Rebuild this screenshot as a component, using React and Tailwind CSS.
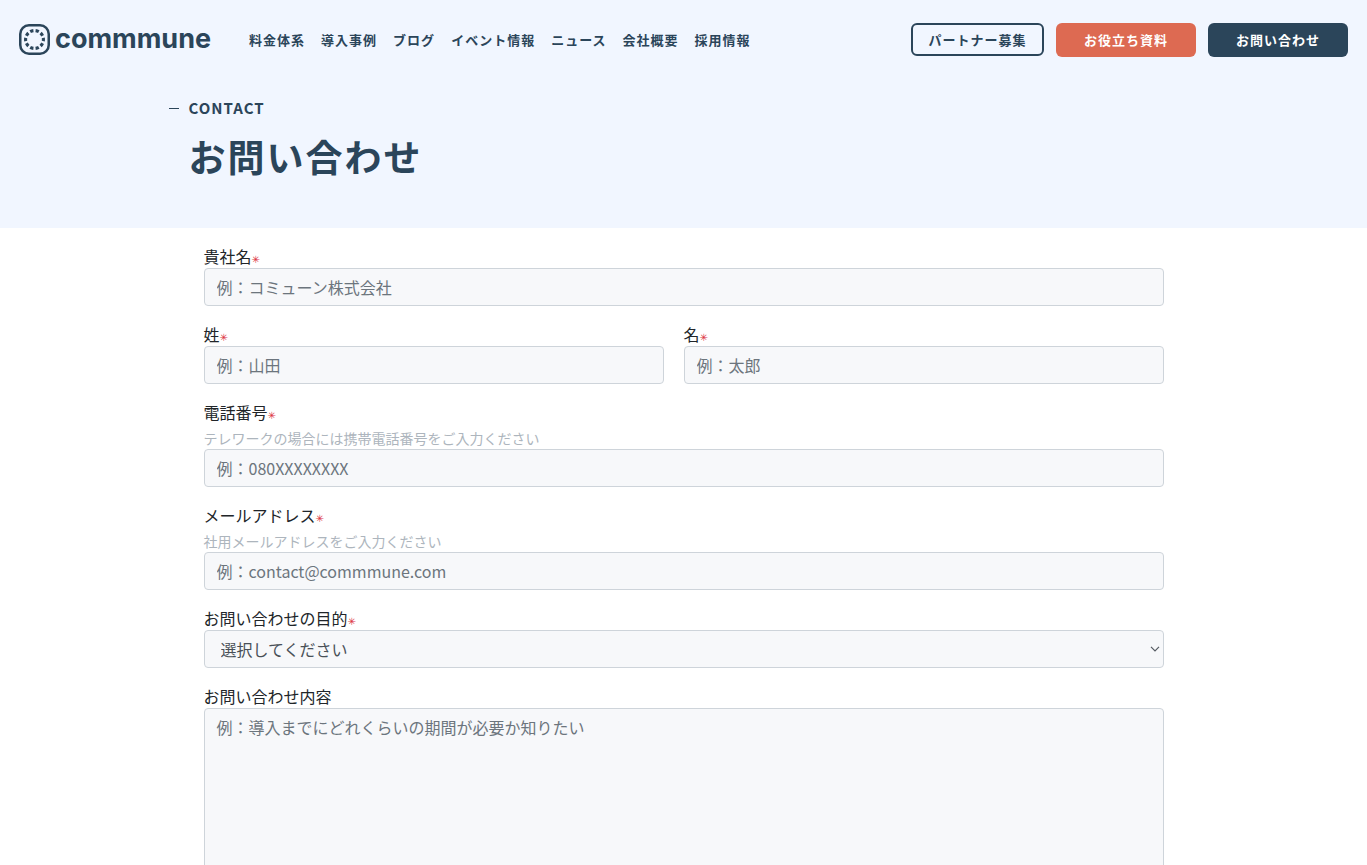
import React from "react";

const NAV = ["料金体系", "導入事例", "ブログ", "イベント情報", "ニュース", "会社概要", "採用情報"];

const fieldClass =
  "block w-full rounded border border-[#ced4da] bg-[#f7f8fa] px-3 text-base leading-6 text-[#495057] placeholder:text-[#6c757d] placeholder:opacity-100 focus:outline-none focus:border-[#2b455a]";

function Logo() {
  return (
    <a href="#" aria-label="commmune" className="flex items-center gap-[5px] text-[#2b455a]">
      <svg viewBox="0 0 32 32" className="h-[31px] w-[31px]" fill="none" stroke="currentColor">
        <rect x="1.3" y="1.3" width="29.4" height="29.4" rx="9" strokeWidth="2.6" />
        <circle
          cx="16"
          cy="16"
          r="9.2"
          strokeWidth="3.2"
          pathLength="100"
          strokeDasharray="6 4"
          strokeDashoffset="3"
        />
      </svg>
      <span className="pb-[2px] font-['Inter',sans-serif] text-[27px] leading-8 font-bold">commmune</span>
    </a>
  );
}

function Header() {
  return (
    <header className="flex h-[78px] items-center pt-px pr-[19px] pl-[19px]">
      <Logo />
      <nav className="ml-[38px] flex gap-4 text-[13px] font-bold tracking-[1px]">
        {NAV.map((item) => (
          <a key={item} href="#" className="whitespace-nowrap">
            {item}
          </a>
        ))}
      </nav>
      <div className="ml-auto flex items-center gap-3 text-[13px] font-bold tracking-[1px]">
        <button type="button" className="h-[33px] w-[133px] rounded-md border-2 border-[#2b455a]">
          パートナー募集
        </button>
        <button type="button" className="h-[34px] w-[140px] rounded-md bg-[#dd6a52] text-white">
          お役立ち資料
        </button>
        <button type="button" className="h-[34px] w-[140px] rounded-md bg-[#2b455a] text-white">
          お問い合わせ
        </button>
      </div>
    </header>
  );
}

function Field({ id, label, help, required, className = "", children }) {
  return (
    <div className={className}>
      <label htmlFor={id} className="block h-6 text-base leading-6 text-[#212529]">
        {label}
        {required && (
          <span className="font-['DejaVu_Sans',sans-serif] text-[10px] leading-none text-[#dc3545]">✳</span>
        )}
      </label>
      {help && <p className="pt-1 text-sm leading-[21px] text-[#adb5bd]">{help}</p>}
      {children}
    </div>
  );
}

function TextField({ type = "text", placeholder, ...props }) {
  return (
    <Field {...props}>
      <input id={props.id} type={type} placeholder={placeholder} className={`${fieldClass} h-[38px]`} />
    </Field>
  );
}

export default function App() {
  return (
    <div className="bg-white font-['Noto_Sans_CJK_JP',sans-serif]">
      <div className="bg-[#f1f6ff] pb-11 text-[#2b455a]">
        <Header />
        <div className="mx-auto max-w-[1030px]">
          <p className="flex items-center gap-[10px] pt-[18px] text-[15px] leading-6 font-bold tracking-[1px]">
            <span className="h-px w-[10px] bg-[#2b455a]" />
            CONTACT
          </p>
          <h1 className="pt-2 pl-5 text-[37px] leading-[56px] font-bold tracking-[2px]">お問い合わせ</h1>
        </div>
      </div>

      <form className="mx-auto flex max-w-[960px] flex-col gap-4 pt-4 pb-8">
        <TextField id="company" label="貴社名" placeholder="例：コミューン株式会社" required />
        <div className="grid grid-cols-2">
          <TextField id="lastname" label="姓" placeholder="例：山田" className="pr-5" required />
          <TextField id="firstname" label="名" placeholder="例：太郎" required />
        </div>
        <TextField
          id="phone"
          type="tel"
          label="電話番号"
          help="テレワークの場合には携帯電話番号をご入力ください"
          placeholder="例：080XXXXXXXX"
          required
        />
        <TextField
          id="email"
          type="email"
          label="メールアドレス"
          help="社用メールアドレスをご入力ください"
          placeholder="例：contact@commmune.com"
          required
        />
        <Field id="purpose" label="お問い合わせの目的" required>
          <div className="relative">
            <select id="purpose" className={`${fieldClass} h-[38px] appearance-none pl-4`}>
              <option>選択してください</option>
            </select>
            <svg
              viewBox="0 0 10 6"
              className="pointer-events-none absolute top-4 right-1 h-[6px] w-[10px]"
              fill="none"
              stroke="#555b62"
              strokeWidth="1.2"
            >
              <path d="M1 0.8 5 4.8 9 0.8" />
            </svg>
          </div>
        </Field>
        <Field id="message" label="お問い合わせ内容">
          <textarea
            id="message"
            rows={10}
            placeholder="例：導入までにどれくらいの期間が必要か知りたい"
            className={`${fieldClass} py-[6px]`}
          />
        </Field>
      </form>
    </div>
  );
}
